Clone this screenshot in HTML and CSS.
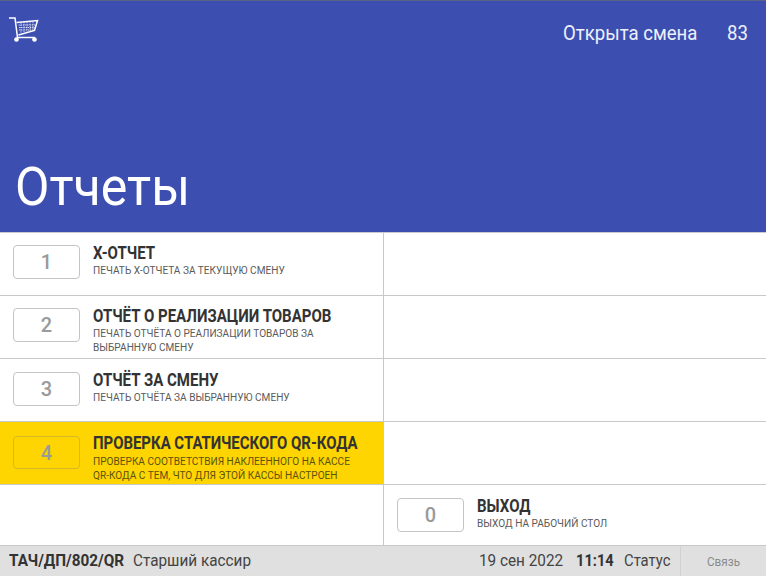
FILE: index.html
```html
<!DOCTYPE html>
<html lang="ru">
<head>
<meta charset="utf-8">
<title>Отчеты</title>
<link rel="stylesheet" href="styles.css">
</head>
<body>
<div class="app">
  <header class="top">
    <div class="top-bar">
      <svg class="cart" width="30" height="27" viewBox="0 0 30 27" fill="none" stroke="#fff" stroke-width="1.5">
        <path d="M0 3H6L8.5 22.5H26"/>
        <path d="M7.5 7.5L28.5 5.5L25.5 15.5L9.5 20"/>
        <path d="M9.5 10H26.5M10 12.5H26M10 15H25M12 7.5V17.5M15 7V17M18 7V16.5M21 6.5V16M24 6.5V15.5" stroke-width=".8" stroke-dasharray="1.3 .9"/>
        <circle cx="7.5" cy="24.5" r="1.6" fill="#fff"/>
        <circle cx="25.5" cy="24.5" r="1.6" fill="#fff"/>
      </svg>
      <div class="shift"><span class="c">Открыта смена</span><span class="c">83</span></div>
    </div>
    <h1 class="title">Отчеты</h1>
  </header>
  <main class="grid">
    <div class="cell"><span class="key">1</span><div class="txt"><div class="name c">Х-ОТЧЕТ</div><div class="desc c">ПЕЧАТЬ Х-ОТЧЕТА ЗА ТЕКУЩУЮ СМЕНУ</div></div></div>
    <div class="cell"></div>
    <div class="cell"><span class="key">2</span><div class="txt"><div class="name c">ОТЧЁТ О РЕАЛИЗАЦИИ ТОВАРОВ</div><div class="desc c">ПЕЧАТЬ ОТЧЁТА О РЕАЛИЗАЦИИ ТОВАРОВ ЗА<br>ВЫБРАННУЮ СМЕНУ</div></div></div>
    <div class="cell"></div>
    <div class="cell"><span class="key">3</span><div class="txt"><div class="name c">ОТЧЁТ ЗА СМЕНУ</div><div class="desc c">ПЕЧАТЬ ОТЧЁТА ЗА ВЫБРАННУЮ СМЕНУ</div></div></div>
    <div class="cell"></div>
    <div class="cell active"><span class="key">4</span><div class="txt"><div class="name c">ПРОВЕРКА СТАТИЧЕСКОГО QR-КОДА</div><div class="desc c">ПРОВЕРКА СООТВЕТСТВИЯ НАКЛЕЕННОГО НА КАССЕ<br>QR-КОДА С ТЕМ, ЧТО ДЛЯ ЭТОЙ КАССЫ НАСТРОЕН</div></div></div>
    <div class="cell"></div>
    <div class="cell"></div>
    <div class="cell"><span class="key">0</span><div class="txt"><div class="name c">ВЫХОД</div><div class="desc c">ВЫХОД НА РАБОЧИЙ СТОЛ</div></div></div>
  </main>
  <footer class="status">
    <b class="c code">ТАЧ/ДП/802/QR</b><span class="c role">Старший кассир</span>
    <span class="c date">19 сен 2022</span><b class="c time">11:14</b><span class="c st">Статус</span>
    <span class="link"><span class="c">Связь</span></span>
  </footer>
</div>
</body>
</html>
```
FILE: styles.css
```css
* { box-sizing: border-box; }
html, body { margin: 0; height: 100%; }
body { background: #fff; font-family: Roboto, "Liberation Sans", sans-serif; overflow: hidden; }
.app { width: 766px; height: 576px; display: flex; flex-direction: column; }
.c { display: inline-block; transform: scaleX(.9); transform-origin: 0 50%; white-space: nowrap; }
.top { height: 233px; background: #3c4eb0; border-top: 1px solid #5a6284; border-bottom: 1px solid #c9c9cf; color: #fff; display: flex; flex-direction: column; justify-content: space-between; }
.top-bar { display: flex; justify-content: space-between; padding: 14px 0 0 9px; }
.shift { display: flex; font-size: 20px; gap: 29px; padding-top: 6px; width: 203px; color: #eef0fa; }
.shift .c { transform: scaleX(.93); }
.shift .c:first-child { width: 135px; }
.title { margin: 0 0 15px 15px; font-size: 53px; font-weight: 400; line-height: 60px; transform: scaleX(.945); transform-origin: 0 50%; }
.grid { height: 312px; display: grid; grid-template-columns: 384px 382px; grid-auto-rows: 63px; }
.grid .cell:nth-child(n+9) { height: 60px; border-bottom: 0; }
.cell { display: flex; align-items: flex-start; border-bottom: 1px solid #c8c8c8; padding: 12px 0 0 13px; }
.cell:nth-child(odd) { border-right: 1px solid #c8c8c8; }
.cell:nth-child(n+5) { padding-top: 13px; }
.active { background: #fed500; }
.key { width: 67px; height: 34px; flex: none; border: 1px solid #c4c4c4; border-radius: 4px; font-size: 20px; font-weight: 500; color: #9a9a9a; text-align: center; line-height: 32px; }
.active .key { border-color: #d6b928; margin-top: 1px; height: 33px; }
.txt { margin: -2px 0 0 13px; color: #333; }
.name { display: block; font-size: 18px; font-weight: 700; line-height: 20px; color: #333; transform: scaleX(.835); }
.active .name { transform: scaleX(.829); }
.desc { display: block; margin-top: 1px; font-size: 11px; line-height: 14px; color: #5a5a5a; transform: scaleX(.917); }
.active .desc { margin-top: 2px; color: #5c5210; }
.status { flex: none; height: 31px; background: #e0e0e0; border-top: 1px solid #c8c8c8; display: flex; align-items: center; padding: 0 0 2px 9px; font-size: 17px; color: #444; }
.status b { color: #333; }
.code { width: 124px; }
.role { width: 346px; }
.date { width: 97px; }
.status .time { width: 48px; transform: scaleX(.86); }
.status .st { width: 56px; transform: scaleX(.87); }
.link { width: 86px; height: 30px; margin: 0 0 -2px auto; border-left: 1px solid #d2d2d2; font-size: 13px; color: #8a8a8a; display: flex; align-items: center; padding-left: 26px; }
```
